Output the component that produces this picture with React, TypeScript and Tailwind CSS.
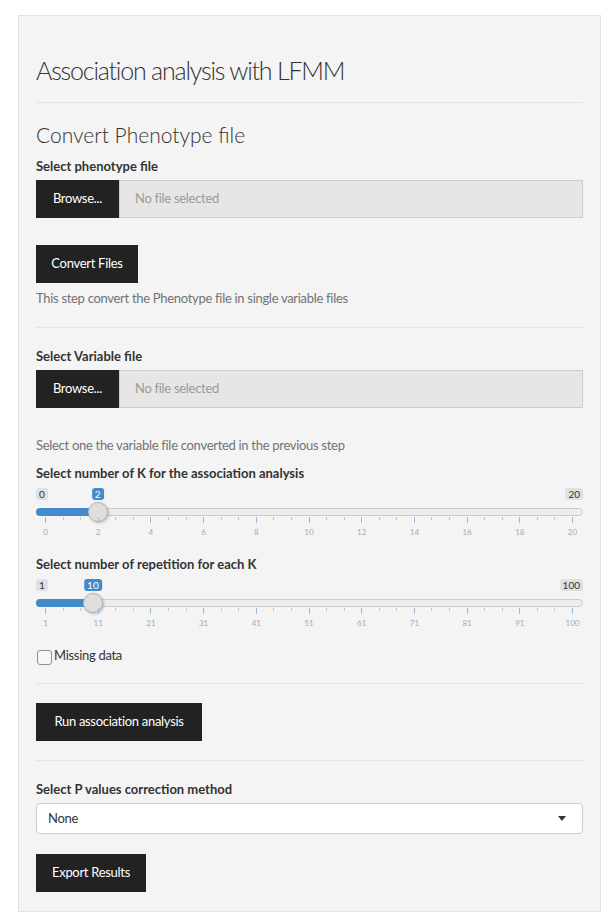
import React from "react";

const START = 9;
const SPAN = 527;

type SliderProps = { min: number; max: number; value: number; labels: number[] };

function Slider({ min, max, value, labels }: SliderProps) {
  const pos = (v: number) => START + ((v - min) / (max - min)) * SPAN;
  const hx = pos(value);
  const majors = labels.map((_, i) => START + (i * SPAN) / 10);
  const minors: number[] = [];
  for (let i = 0; i < 10; i++) {
    for (let z = 1; z <= 2; z++) minors.push(START + (i * SPAN) / 10 + (z * SPAN) / 30);
  }
  return (
    <div className="relative h-[56px] w-full">
      <span className="absolute left-0 top-[3px] h-[12px] rounded-[3px] bg-[#e0e0e0] px-[3px] text-[10px] leading-[12px] text-[#333]">
        {min}
      </span>
      <span className="absolute right-0 top-[3px] h-[12px] rounded-[3px] bg-[#e0e0e0] px-[3px] text-[10px] leading-[12px] text-[#333]">
        {max}
      </span>
      <span
        className="absolute top-[3px] h-[12px] -translate-x-1/2 rounded-[3px] bg-[#428bca] px-[3px] text-[10px] leading-[12px] text-white"
        style={{ left: hx }}
      >
        {value}
      </span>
      <div className="absolute left-0 right-0 top-[23px] h-[8px] rounded-full border border-[#cccccc] bg-[#ededed]" />
      <div
        className="absolute left-0 top-[23px] h-[8px] rounded-l-full bg-[#428bca]"
        style={{ width: hx }}
      />
      <div
        className="absolute top-[17px] h-[20px] w-[20px] -translate-x-1/2 rounded-full border border-[#b5b5b5] bg-[#dedede] shadow-[1px_1px_3px_rgba(0,0,0,0.25)]"
        style={{ left: hx }}
      />
      {minors.map((x, i) => (
        <div key={"m" + i} className="absolute top-[32px] h-[3px] w-px bg-[#c8c8c8]" style={{ left: x }} />
      ))}
      {majors.map((x, i) => (
        <div key={"M" + i} className="absolute top-[32px] h-[6px] w-px bg-[#9dbbdb]" style={{ left: x }} />
      ))}
      {majors.map((x, i) => (
        <span
          key={"t" + i}
          className="absolute top-[42px] -translate-x-1/2 text-[8px] leading-[10px] text-[#a3abb3]"
          style={{ left: x + 0.5 }}
        >
          {labels[i]}
        </span>
      ))}
    </div>
  );
}

function FileInput() {
  return (
    <div className="flex h-[38px] w-full">
      <div className="flex w-[83px] items-center justify-center bg-[#222222] text-[13px] tracking-[-0.3px] text-white">
        Browse...
      </div>
      <div className="flex flex-1 items-center border border-[#cccccc] bg-[#e6e6e6] pl-[15px] text-[13px] tracking-[-0.3px] text-[#9a9a9a]">
        No file selected
      </div>
    </div>
  );
}

function DarkButton({ children, w }: { children: React.ReactNode; w: string }) {
  return (
    <div
      className={
        "flex h-[38px] items-center justify-center bg-[#222222] text-[13px] tracking-[-0.3px] text-white " + w
      }
    >
      {children}
    </div>
  );
}

function Hr() {
  return <div className="h-px w-full bg-[#e3e3e3]" />;
}

function Label({ children }: { children: React.ReactNode }) {
  return <div className="h-[20px] text-[13px] font-bold leading-[20px] text-[#333]">{children}</div>;
}

export default function App() {
  const kLabels = [0, 2, 4, 6, 8, 10, 12, 14, 16, 18, 20];
  const rLabels = [1, 11, 21, 31, 41, 51, 61, 71, 81, 91, 100];
  return (
    <div className="min-h-[913px] bg-white pt-[15px] font-['Lato',sans-serif] text-[#333]">
      <div className="ml-[18px] w-[583px] border border-[#e3e3e3] bg-[#f4f4f4] px-[17px] pb-[19px]">
        <div className="mt-[38px] h-[33px] text-[25px] font-light leading-[33px] tracking-[-1.2px] text-[#333]">
          Association analysis with LFMM
        </div>
        <div className="mt-[15px]">
          <Hr />
        </div>
        <div className="mt-[19px] h-[26px] text-[21px] font-light leading-[26px] text-[#333]">Convert Phenotype file</div>
        <div className="mt-[8px]">
          <Label>Select phenotype file</Label>
        </div>
        <div className="mt-[4px]">
          <FileInput />
        </div>
        <div className="mt-[27px]">
          <DarkButton w="w-[102px]">Convert Files</DarkButton>
        </div>
        <div className="mt-[5px] h-[20px] text-[13px] leading-[20px] tracking-[-0.3px] text-[#737373]">
          This step convert the Phenotype file in single variable files
        </div>
        <div className="mt-[19px]">
          <Hr />
        </div>
        <div className="mt-[18px]">
          <Label>Select Variable file</Label>
        </div>
        <div className="mt-[4px]">
          <FileInput />
        </div>
        <div className="mt-[27px] h-[20px] text-[13px] leading-[20px] tracking-[-0.3px] text-[#737373]">
          Select one the variable file converted in the previous step
        </div>
        <div className="mt-[8px]">
          <Label>Select number of K for the association analysis</Label>
        </div>
        <div className="mt-[2px]">
          <Slider min={0} max={20} value={2} labels={kLabels} />
        </div>
        <div className="mt-[13px]">
          <Label>Select number of repetition for each K</Label>
        </div>
        <div className="mt-[2px]">
          <Slider min={1} max={100} value={10} labels={rLabels} />
        </div>
        <div className="mt-[13px] flex h-[21px] items-start">
          <div className="ml-px mt-[5px] h-[15px] w-[15px] rounded-[3px] border border-[#8f8f8f] bg-[#f7f7f7]" />
          <span className="ml-[2px] text-[13px] leading-[20px] tracking-[-0.3px] text-[#333]">Missing data</span>
        </div>
        <div className="mt-[17px]">
          <Hr />
        </div>
        <div className="mt-[19px]">
          <DarkButton w="w-[166px]">Run association analysis</DarkButton>
        </div>
        <div className="mt-[19px]">
          <Hr />
        </div>
        <div className="mt-[18px]">
          <Label>Select P values correction method</Label>
        </div>
        <div className="mt-[4px] flex h-[31px] items-center justify-between rounded-[4px] border border-[#cccccc] bg-white pl-[11px] pr-[16px]">
          <span className="text-[13px] tracking-[-0.3px] text-[#333]">None</span>
          <span className="h-0 w-0 border-x-[4px] border-t-[5px] border-x-transparent border-t-[#333]" />
        </div>
        <div className="mt-[20px]">
          <DarkButton w="w-[110px]">Export Results</DarkButton>
        </div>
      </div>
    </div>
  );
}
